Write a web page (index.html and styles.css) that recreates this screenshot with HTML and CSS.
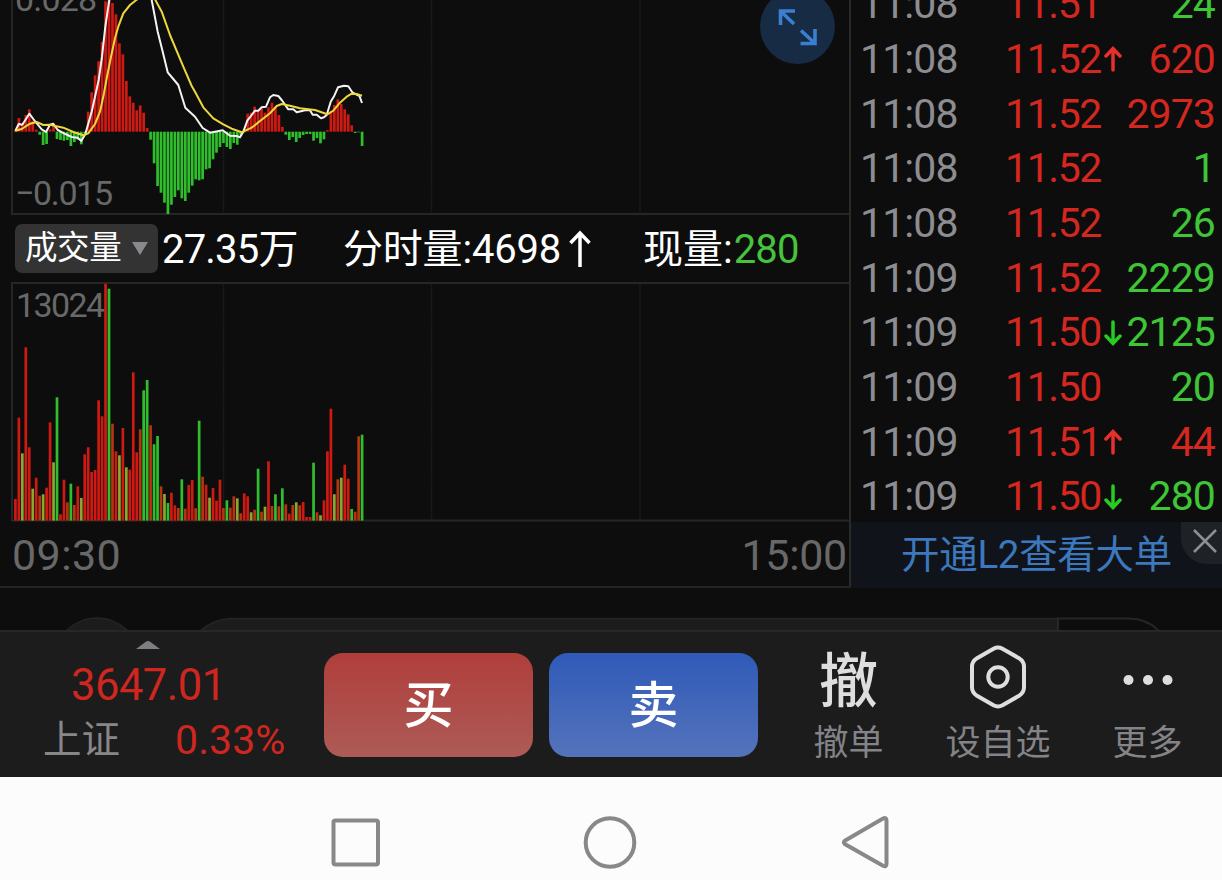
FILE: index.html
```html
<!DOCTYPE html>
<html lang="zh-CN">
<head>
<meta charset="utf-8">
<title>分时行情</title>
<link rel="stylesheet" href="styles.css">
</head>
<body>
<main class="quote">
  <section class="charts">
    <div class="macd">
      <svg id="macd" width="849" height="215" viewBox="0 0 849 215">
        <path class="grid" d="M223.5 0V213M431.5 0V213M640 0V213"/>
        <path class="frame" d="M12 0V214H849"/>
        <text class="scale" x="15" y="11" textLength="82">0.028</text>
        <text class="scale" x="15" y="205" textLength="98">−0.015</text>
        <g id="macd-bars"></g>
        <polyline id="dif" class="dif"/>
        <polyline id="dea" class="dea"/>
      </svg>
      <button class="expand" aria-label="expand">
        <svg width="75" height="75" viewBox="0 0 75 75"><path d="M20.500 36V22H35M21 22.500L34 35M55 40V54.500H40.500M54.500 54L41 41.500"/></svg>
      </button>
    </div>
    <div class="volume-head">
      <button class="indicator">成交量<svg width="16" height="13" viewBox="0 0 16 13"><path d="M0 0H16L8 13Z"/></svg></button>
      <span class="vol-total">27.35万</span>
      <span class="vol-minute">分时量:4698</span>
      <svg class="vol-up" width="22" height="38" viewBox="0 0 22 38"><path d="M11 37V4M1.500 13L11 3L20.500 13"/></svg>
      <span class="vol-now">现量:<b>280</b></span>
    </div>
    <svg id="volume" width="849" height="240" viewBox="0 282 849 240">
      <path class="grid" d="M223.500 283V520M431.500 283V520M640 283V520"/>
      <path class="frame" d="M849 283H12V520.500H849"/>
      <text class="scale" x="16" y="317" textLength="89">13024</text>
      <g id="volume-bars"></g>
    </svg>
    <div class="axis"><span class="open">09:30</span><span>15:00</span></div>
  </section>
  <aside class="ticks">
    <div class="tick-list" id="ticks"></div>
    <div class="promo"><span>开通L2查看大单</span>
      <button class="close" aria-label="close"><svg width="41" height="42" viewBox="0 0 41 42"><path d="M13 8L35 30M35 8L13 30"/></svg></button>
    </div>
  </aside>
</main>
<section class="peek">
  <svg width="1222" height="42" viewBox="0 1 1222 42">
    <circle class="peek-fill" cx="97" cy="74" r="43"/>
    <path class="peek-fill" d="M1058 44V31.500H230Q214 32 200 44"/>
    <path class="peek-line" d="M1058 44V31.500H1130Q1147 32 1159 44"/>
  </svg>
</section>
<footer class="trade">
  <div class="index">
    <svg class="index-up" width="24" height="8" viewBox="0 0 24 8"><path d="M0 8L9.500 1Q12 -1 14.500 1L24 8Z"/></svg>
    <div class="index-value">3647.01</div>
    <div class="index-row"><span class="index-name">上证</span><span class="index-pct">0.33%</span></div>
  </div>
  <button class="order buy">买</button>
  <button class="order sell">卖</button>
  <div class="action cancel"><strong>撤</strong><span>撤单</span></div>
  <div class="action fav">
    <svg width="60" height="64" viewBox="0 0 60 64"><path d="M25.500 3.700Q30 1.300 34.500 3.700L51 13.200Q56 16.500 56 21.500V42.500Q56 47.500 51 50.800L34.500 60.300Q30 62.700 25.500 60.300L9 50.800Q4 47.500 4 42.500V21.500Q4 16.500 9 13.200Z"/><circle cx="30" cy="32" r="9.700"/></svg>
    <span>设自选</span>
  </div>
  <div class="action more">
    <svg width="52" height="12" viewBox="0 0 52 12"><circle cx="6.500" cy="6" r="5"/><circle cx="26" cy="6" r="5"/><circle cx="45.500" cy="6" r="5"/></svg>
    <span>更多</span>
  </div>
</footer>
<nav class="system">
  <svg width="1222" height="103" viewBox="0 0 1222 103">
    <rect x="333.500" y="43.500" width="44.500" height="44" rx="2"/>
    <circle cx="610" cy="65.500" r="24.300"/>
    <path d="M844.800 63.800L883 41.600Q886.500 40 886.500 43.500V87Q886.500 90.500 883 88.800L844.800 67Q843 65.400 844.800 63.800Z"/>
  </svg>
</nav>
<script src="charts.js"></script>
</body>
</html>
```
FILE: styles.css
```css
* { box-sizing: border-box; }
body {
  margin: 0;
  width: 1222px;
  height: 880px;
  overflow: hidden;
  background: #0d0d0d;
  font-family: Roboto, "Noto Sans CJK SC", sans-serif;
  display: flex;
  flex-direction: column;
}
button { border: 0; padding: 0; margin: 0; font: inherit; color: inherit; }
svg { display: block; flex: none; }

.quote { height: 588px; display: flex; border-bottom: 2px solid #242424; flex: none; }
.charts { width: 849px; display: flex; flex-direction: column; flex: none; }
.macd { position: relative; height: 215px; flex: none; }
.grid { stroke: #202020; stroke-width: 1.5; stroke-dasharray: 1.5 1; fill: none; }
.frame { stroke: #262626; stroke-width: 2; fill: none; }
.scale { font-size: 34px; fill: #686868; }
.dif, .dea { fill: none; stroke-width: 2; stroke-linejoin: round; }
.dif { stroke: #f5f2f2; }
.dea { stroke: #eed73b; }
.r { fill: #cf1a13; }
.b { fill: #b8330f; }
.g { fill: #2fbf2c; }
.o { fill: #88a92f; }
.expand { position: absolute; left: 760px; top: -11px; width: 75px; height: 75px; border-radius: 50%; background: #182b45; }
.expand path { fill: none; stroke: #3a7fd0; stroke-width: 3.6; }

.volume-head { height: 67px; flex: none; display: flex; align-items: center; padding-left: 15px; color: #fff; font-size: 40px; line-height: 67px; white-space: nowrap; }
.volume-head span { padding-top: 2px; }
.indicator { width: 143px; height: 49px; border-radius: 7px; background: #333; display: flex; align-items: center; gap: 11px; padding-left: 10px; font-size: 32.5px; line-height: 49px; letter-spacing: -0.4px; }
.indicator path { fill: #8a8a8e; }
.vol-total { margin-left: 4px; width: 181px; letter-spacing: -0.8px; }
.vol-minute { width: 221px; letter-spacing: -0.2px; }
.vol-up { margin-left: 5px; margin-right: 52px; }
.vol-up path { fill: none; stroke: #fff; stroke-width: 3.5; }
.vol-now { letter-spacing: 0; }
.vol-now b { font-weight: 400; color: #46c43c; margin-left: 1px; letter-spacing: -0.8px; }

.axis { flex: 1; display: flex; justify-content: space-between; padding: 0 2px 0 12px; font-size: 43px; line-height: 66px; color: #686868; letter-spacing: -0.3px; }
.open { letter-spacing: 0.4px; }

.ticks { flex: 1; border-left: 2px solid #2a2a2a; display: flex; flex-direction: column; }
.tick-list { height: 522px; flex: none; overflow: hidden; display: flex; flex-direction: column; justify-content: flex-end; }
.tick { flex: none; height: 54.67px; line-height: 54.67px; display: grid; grid-template-columns: 145px 106px 1fr; padding: 0 7px 0 9px; font-size: 41px; letter-spacing: -0.9px; }
.tick:last-child { margin-bottom: -2px; }
.time { color: #8c8c91; }
.price { color: #d3271f; display: flex; align-items: center; letter-spacing: -1.4px; }
.price svg { margin-left: 3px; }
.price path { fill: none; stroke-width: 3.5; stroke-linecap: round; }
.red { color: #d3271f; }
.green { color: #3ec637; }
.qty { text-align: right; }
.qty, .price { white-space: nowrap; }
.promo { position: relative; flex: 1; background: #10141a; color: #3c78bd; font-size: 38.5px; line-height: 66px; padding-left: 50px; letter-spacing: -0.3px; }
.close { position: absolute; right: 0; top: 0; width: 41px; height: 42px; background: #1e2125; border-bottom-left-radius: 26px; }
.close path { fill: none; stroke: #8d8f92; stroke-width: 2.5; }

.peek { height: 42px; flex: none; }
.peek-fill { fill: #1c1c1c; stroke: #252525; stroke-width: 1.5; }
.peek-line { fill: none; stroke: #272727; stroke-width: 2; }

.trade { height: 147px; flex: none; background: #1c1c1c; border-top: 2px solid #272727; display: flex; align-items: flex-start; }
.trade > * { flex: none; }
.index { width: 324px; padding-top: 9px; color: #cf2620; }
.index-up { margin-left: 136px; }
.index-up path { fill: #7d7d82; }
.index-value { padding-left: 71px; font-size: 43.5px; line-height: 56px; margin-top: 9px; letter-spacing: -0.5px; }
.index-row { display: flex; line-height: 52px; padding-left: 43px; }
.index-name { width: 132px; color: #87878b; font-size: 38.5px; }
.index-pct { font-size: 41px; letter-spacing: 0.1px; }
.order { width: 209px; height: 104px; margin-top: 21px; border-radius: 19px; color: #fff; font-size: 50px; font-weight: 500; line-height: 107px; }
.buy { background: linear-gradient(#b03e3b, #ad5b57); margin-right: 16px; }
.sell { background: linear-gradient(#2f5ab8, #5473bb); }
.action { height: 137px; display: flex; flex-direction: column; align-items: center; color: #838388; font-size: 35px; line-height: 50px; }
.action > span { margin-top: auto; }
.action svg { fill: none; stroke: #dedede; stroke-width: 4; }
.cancel { width: 181px; }
.cancel strong { color: #dedede; font-weight: 500; font-size: 59px; line-height: 70px; margin-top: 15px; }
.fav { width: 118px; margin-right: 16px; }
.fav svg { margin-top: 13px; }
.more { width: 149px; }
.action.more svg { margin-top: 42px; fill: #dedede; stroke: none; }
.system { height: 103px; flex: none; background: #fcfcfc; }
.system svg { fill: none; stroke: #888; stroke-width: 4; }
```
FILE: charts.js
```js
const STEP = 3.467, START = 15.4;

function bars(id, items, zero) {
  document.getElementById(id).innerHTML = items.map(([y, c], i) => {
    const top = Math.min(y, zero), h = Math.abs(y - zero);
    return `<rect class="${c}" x="${(START + i * STEP - 1.35).toFixed(2)}" y="${top.toFixed(1)}" width="2.7" height="${h.toFixed(1)}"/>`;
  }).join('');
}

// Heights are stored in thirds of a pixel, followed by a colour key.
const early = '672r 428r 535o 217r 517r 641o 608r 662b 658o 638r 442r 562o 367g 718r 614r 682b 626g 690b 634r 669o 538r 517r 591r 585r 376r 424r 26r 41g 446b 529r 541o 459r 577o 584r 292r 532r 463b 346g 315g 451b 508g 483g 634b 657o 684g 653r 691r 699b'.split(' ');
const late = '298g 386b 315r 300r 385b 122g 290b 314r 353o 324r 362r 299r 384b 361g 383b 349b 355o 400b 340r 349r 397o 389b 266g 395b 380o 244r 378b 343g 379b 325g 373b 401r 375b 367o 376b 366r 411r 411r 248g 397b 406o 361r 214r 86r 343o 298b 293o 254r 296r 387g 395b 169b 164g'.split(' ');
const parse = offset => s => [parseInt(s, 10) / 3 + offset, s.slice(-1)];
bars('volume-bars', early.map(parse(275)).concat(late.map(parse(380))), 520.6);

const macd = [393,354,372,345,328,362,389,404,435,432,388,375,417,420,422,420,438,426,419,433,400,335,277,226,184,126,4,-10,9,43,130,163,243,289,308,331,316,338,384,419,490,558,578,608,642,614,591,571,595,603,578,557,538,541,538,508,505,478,458,441,429,441,447,429,434,405,397,341,338,320,332,326,338,322,308,320,345,381,404,420,411,426,414,405,402,402,422,414,430,418,391,336,315,298,312,328,343,376,399,397,438];
bars('macd-bars', macd.map(v => [v / 3, v < 395 ? 'r' : 'g']), 131.7);

const line = (id, a, b) => document.getElementById(id).setAttribute('points',
  a.map(p => [p[0] / 3, p[1] / 3]).concat(b.map(p => [p[0] / 3 + 190, p[1] / 3])).map(p => p.map(n => n.toFixed(1)).join()).join(' '));
line('dif',
  [[46,393],[56,372],[67,374],[88,341],[100,357],[112,372],[125,388],[138,396],[150,374],[160,371],[173,390],[192,400],[215,411],[233,413],[244,423],[256,402],[275,335],[296,240],[306,170],[316,80],[328,0],[332,-60],[440,-60],[455,0],[473,95],[488,155],[503,217],[520,237],[535,255],[556,323]],
  [[2,338],[15,350],[38,384],[60,398],[98,391],[120,407],[140,408],[150,412],[160,395],[172,362],[185,345],[195,332],[205,332],[215,322],[228,320],[240,292],[250,285],[265,288],[275,300],[295,328],[310,328],[320,337],[345,331],[360,331],[368,344],[380,344],[393,355],[402,352],[410,345],[422,305],[433,287],[444,262],[462,257],[475,259],[487,277],[500,284],[508,287],[516,309]]);
line('dea',
  [[46,392],[65,387],[90,371],[110,366],[130,375],[150,374],[170,379],[190,383],[220,396],[250,406],[265,400],[285,372],[300,335],[312,280],[320,235],[333,170],[345,115],[355,80],[370,40],[390,15],[412,-2],[435,-10],[465,-2],[485,35],[510,105],[550,200]],
  [[5,258],[15,275],[40,322],[70,355],[100,373],[125,386],[155,397],[185,383],[210,363],[240,340],[260,318],[275,312],[300,317],[330,325],[375,330],[412,343],[430,332],[450,308],[470,290],[485,281],[500,282],[516,287]]);

const ticks = [
  ['11:08','11.51','','24','green'], ['11:08','11.52','up','620','red'],
  ['11:08','11.52','','2973','red'], ['11:08','11.52','','1','green'],
  ['11:08','11.52','','26','green'], ['11:09','11.52','','2229','green'],
  ['11:09','11.50','down','2125','green'], ['11:09','11.50','','20','green'],
  ['11:09','11.51','up','44','red'], ['11:09','11.50','down','280','green']
];
const arrow = {
  '': '',
  up: '<svg width="18" height="28" viewBox="0 0 18 28"><path stroke="#e8302a" d="M9 25V4M2 11L9 3.500L16 11"/></svg>',
  down: '<svg width="18" height="28" viewBox="0 0 18 28"><path stroke="#27cc22" d="M9 3V24M2 17L9 24.500L16 17"/></svg>'
};
document.getElementById('ticks').innerHTML = ticks.map(([t, p, a, q, c]) =>
  `<div class="tick"><span class="time">${t}</span><span class="price">${p}${arrow[a]}</span><span class="qty ${c}">${q}</span></div>`).join('');
```
